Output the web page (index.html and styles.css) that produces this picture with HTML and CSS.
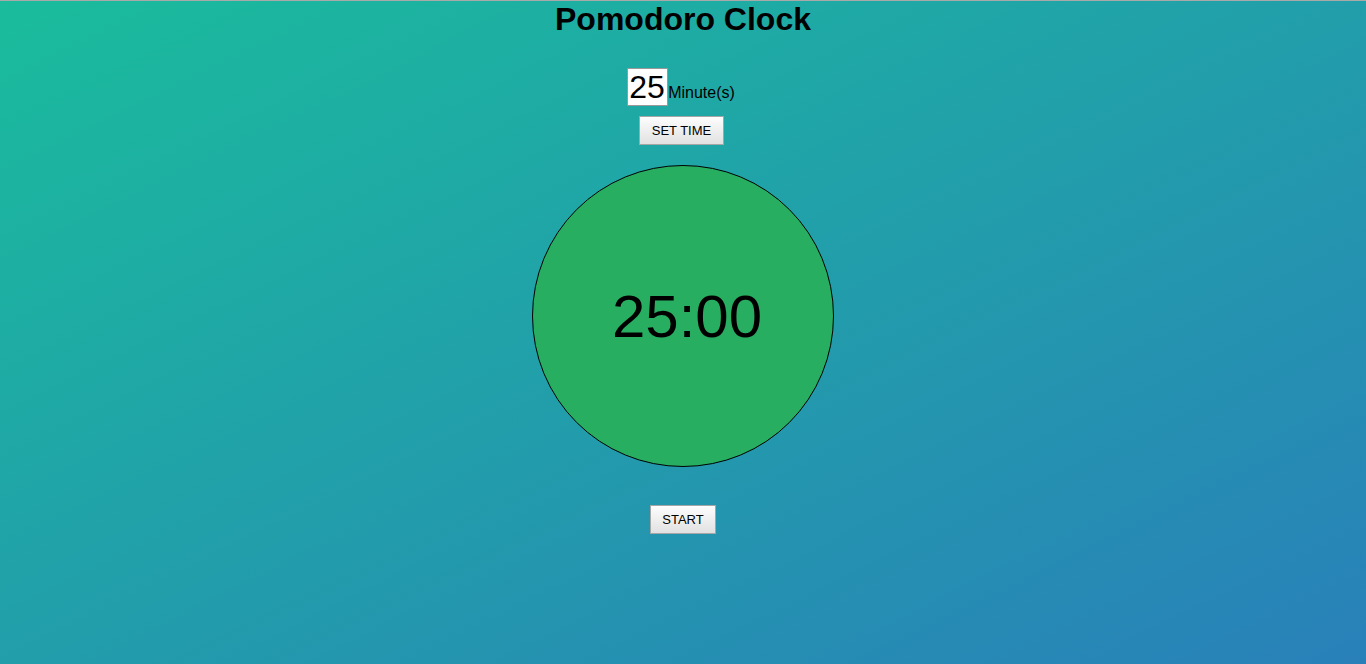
FILE: index.html
```html
<!DOCTYPE html>
<html>
<head>
<meta charset="utf-8">
<title>Pomodoro Clock</title>
<link rel="stylesheet" href="styles.css">
</head>
<body>
<main class="app">
  <h1 class="title">Pomodoro Clock</h1>
  <div class="setter">
    <input class="minutes" type="text" value="25">
    <span class="unit">Minute(s)</span>
  </div>
  <button class="btn btn-set">SET TIME</button>
  <div class="clock"><span class="time">25:00</span></div>
  <button class="btn btn-start">START</button>
</main>
</body>
</html>
```
FILE: styles.css
```css
html, body {
  margin: 0;
  height: 100%;
}
body {
  font-family: "Liberation Sans", Arial, sans-serif;
  background: linear-gradient(to bottom right, #1abc9c, #2980b9);
  border-top: 1px solid #a9a9a9;
  box-sizing: border-box;
  overflow: hidden;
}
.app {
  display: flex;
  flex-direction: column;
  align-items: center;
}
.title {
  margin: 0;
  font-size: 32px;
  font-weight: bold;
  color: #000;
  line-height: 37px;
}
.setter {
  margin-top: 30px;
  display: flex;
  align-items: baseline;
  margin-right: 4px;
}
.minutes {
  width: 37px;
  height: 36px;
  padding: 0 1px;
  border: 1px solid #999;
  font-family: "Liberation Sans", Arial, sans-serif;
  font-size: 32px;
  background: #fff;
  color: #000;
  box-sizing: content-box;
}
.unit {
  font-size: 16px;
  color: #000;
}
.btn {
  font-family: "Liberation Sans", Arial, sans-serif;
  font-size: 13px;
  color: #000;
  border: 1px solid #a6a6a6;
  background: linear-gradient(#fdfdfd, #e1e1e1);
  height: 29px;
  padding: 0 11px;
}
.btn-set {
  margin-top: 10px;
  padding: 0 12px;
  margin-right: 3px;
}
.clock {
  margin-top: 20px;
  width: 300px;
  height: 300px;
  border: 1px solid #000;
  border-radius: 50%;
  background: #27ae60;
  display: flex;
  align-items: center;
  justify-content: center;
}
.time {
  font-size: 60px;
  color: #000;
  padding-left: 8px;
}
.btn-start {
  margin-top: 38px;
}
```
